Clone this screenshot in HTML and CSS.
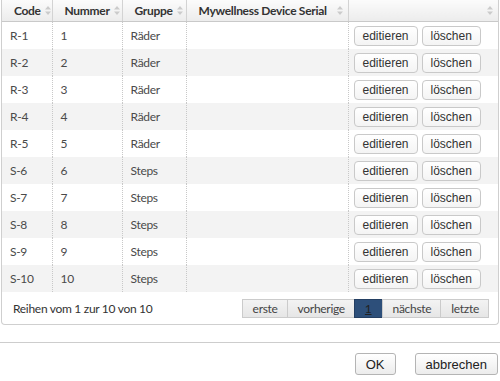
FILE: index.html
```html
<!DOCTYPE html>
<html lang="de">
<head>
<meta charset="utf-8">
<title>Geräte</title>
<link rel="stylesheet" href="styles.css">
</head>
<body>
<div class="grid">
  <table class="tbl">
    <colgroup>
      <col class="c1"><col class="c2"><col class="c3"><col class="c4"><col class="c5">
    </colgroup>
    <thead>
      <tr>
        <th><div class="th-in"><span>Code</span><svg class="sort" width="6" height="9" viewBox="0 0 6 9"><path d="M0 3.5 L3 0 L6 3.5Z M0 5.5 L3 9 L6 5.5Z"/></svg></div></th>
        <th><div class="th-in"><span>Nummer</span><svg class="sort" width="6" height="9" viewBox="0 0 6 9"><path d="M0 3.5 L3 0 L6 3.5Z M0 5.5 L3 9 L6 5.5Z"/></svg></div></th>
        <th><div class="th-in"><span>Gruppe</span><svg class="sort" width="6" height="9" viewBox="0 0 6 9"><path d="M0 3.5 L3 0 L6 3.5Z M0 5.5 L3 9 L6 5.5Z"/></svg></div></th>
        <th><div class="th-in"><span>Mywellness Device Serial</span><svg class="sort" width="6" height="9" viewBox="0 0 6 9"><path d="M0 3.5 L3 0 L6 3.5Z M0 5.5 L3 9 L6 5.5Z"/></svg></div></th>
        <th class="last"><div class="th-in"><span></span><svg class="sort" width="6" height="9" viewBox="0 0 6 9"><path d="M0 3.5 L3 0 L6 3.5Z M0 5.5 L3 9 L6 5.5Z"/></svg></div></th>
      </tr>
    </thead>
    <tbody>
      <tr><td>R-1</td><td>1</td><td>Räder</td><td></td><td class="act"><button class="btn">editieren</button><button class="btn">löschen</button></td></tr>
      <tr><td>R-2</td><td>2</td><td>Räder</td><td></td><td class="act"><button class="btn">editieren</button><button class="btn">löschen</button></td></tr>
      <tr><td>R-3</td><td>3</td><td>Räder</td><td></td><td class="act"><button class="btn">editieren</button><button class="btn">löschen</button></td></tr>
      <tr><td>R-4</td><td>4</td><td>Räder</td><td></td><td class="act"><button class="btn">editieren</button><button class="btn">löschen</button></td></tr>
      <tr><td>R-5</td><td>5</td><td>Räder</td><td></td><td class="act"><button class="btn">editieren</button><button class="btn">löschen</button></td></tr>
      <tr><td>S-6</td><td>6</td><td>Steps</td><td></td><td class="act"><button class="btn">editieren</button><button class="btn">löschen</button></td></tr>
      <tr><td>S-7</td><td>7</td><td>Steps</td><td></td><td class="act"><button class="btn">editieren</button><button class="btn">löschen</button></td></tr>
      <tr><td>S-8</td><td>8</td><td>Steps</td><td></td><td class="act"><button class="btn">editieren</button><button class="btn">löschen</button></td></tr>
      <tr><td>S-9</td><td>9</td><td>Steps</td><td></td><td class="act"><button class="btn">editieren</button><button class="btn">löschen</button></td></tr>
      <tr><td>S-10</td><td>10</td><td>Steps</td><td></td><td class="act"><button class="btn">editieren</button><button class="btn">löschen</button></td></tr>
    </tbody>
  </table>
  <div class="footer">
    <span class="info">Reihen vom 1 zur 10 von 10</span>
    <div class="pager">
      <span class="pg">erste</span><span class="pg">vorherige</span><span class="pg cur">1</span><span class="pg">nächste</span><span class="pg">letzte</span>
    </div>
  </div>
</div>
<div class="dlg-foot">
  <button class="dbtn ok">OK</button>
  <button class="dbtn">abbrechen</button>
</div>
</body>
</html>
```

FILE: styles.css
```css
html, body { margin: 0; padding: 0; background: #fff; }
body { font-family: Lato, "Open Sans", sans-serif; font-size: 12px; letter-spacing: -0.3px; color: #444; width: 500px; }

.grid {
  margin-left: 1px;
  width: 496px;
  border: 1px solid #cfcfcf;
  border-top: none;
  border-radius: 0 0 4px 4px;
}
.tbl { width: 100%; border-collapse: collapse; table-layout: fixed; }
.c1 { width: 50px; } .c2 { width: 70px; } .c3 { width: 64px; } .c4 { width: 162px; } .c5 { width: 150px; }

th {
  height: 21px;
  padding: 0 5px 0 12px;
  background: linear-gradient(#fbfbfb, #ececec);
  border-right: 1px solid #d3d3d3;
  border-bottom: 1px solid #c9c9c9;
  font-weight: bold;
  color: #333;
  text-align: left;
}
th.last { border-right: none; }
.th-in { display: flex; align-items: center; justify-content: space-between; gap: 4px; white-space: nowrap; }
.sort { fill: #cbcbcb; flex: none; }

td {
  height: 27px;
  padding: 0 8px;
  border-right: 1px dotted #c8c8c8;
  color: #4a4a4a;
  white-space: nowrap;
}
td.act { border-right: none; padding: 0 5px; }
tbody tr:nth-child(even) td { background: #f3f3f3; }

.btn {
  font-family: "Liberation Sans", Arial, sans-serif;
  font-size: 12px;
  letter-spacing: 0;
  color: #333;
  height: 20px;
  padding: 0 8px;
  margin-right: 4px;
  background: linear-gradient(#ffffff, #f4f4f4);
  border: 1px solid #c9c9c9;
  border-radius: 4px;
  vertical-align: middle;
}

.footer {
  height: 32px;
  display: flex;
  align-items: center;
  justify-content: space-between;
  padding: 0 9px 0 11px;
}
.info { color: #333; }
.pager { display: flex; }
.pg {
  height: 17px;
  line-height: 17px;
  padding: 0 9px 0 10px;
  color: #444;
  background: linear-gradient(#f3f3f3, #e6e6e6);
  border: 1px solid #cbcbcb;
  margin-left: -1px;
}
.pg.cur {
  background: #2d4f7a;
  border-color: #243f63;
  padding: 0 10px;
  color: #222;
  text-decoration: underline;
}

.dlg-foot {
  margin-top: 17px;
  border-top: 1px solid #cdcdcd;
  padding: 10px 2px 0 0;
  display: flex;
  justify-content: flex-end;
  gap: 19px;
}
.dbtn {
  font-family: "Liberation Sans", Arial, sans-serif;
  font-size: 13px;
  color: #222;
  height: 22px;
  padding: 0 10px;
  background: linear-gradient(#ffffff, #ececec);
  border: 1px solid #b4b4b4;
  border-radius: 3px;
}
.dbtn.ok { width: 41px; }
```
